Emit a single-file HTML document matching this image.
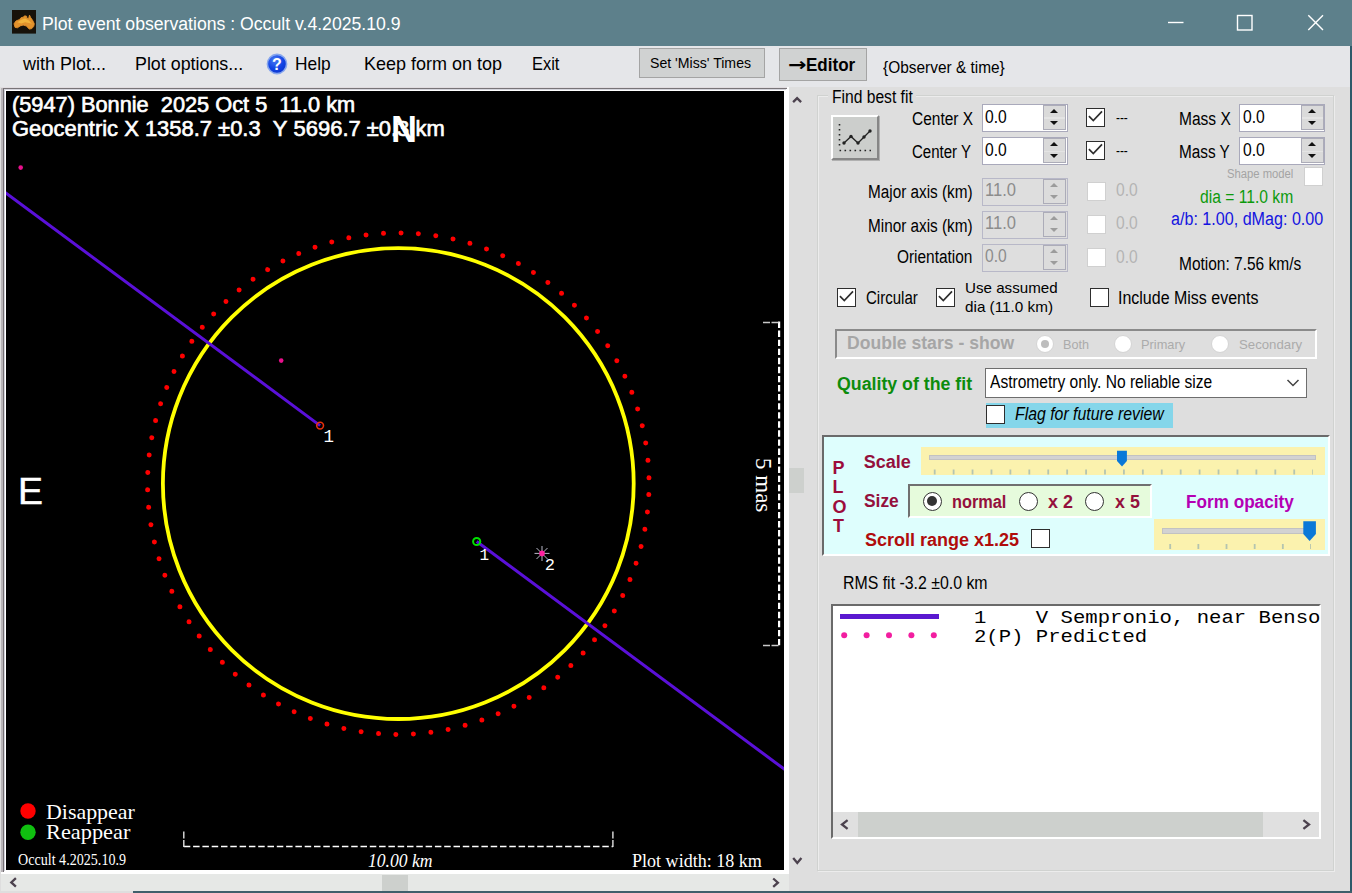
<!DOCTYPE html>
<html lang="en">
<head>
<meta charset="utf-8">
<title>Plot event observations : Occult v.4.2025.10.9</title>
<style>
html,body{margin:0;padding:0}
body{width:1352px;height:893px;overflow:hidden;background:#dedede;font-family:"Liberation Sans",sans-serif}
#win{position:relative;width:1352px;height:893px;overflow:hidden;background:#dedede}
#win div,#win span,#win svg{position:absolute;box-sizing:border-box}
.t{white-space:pre;transform-origin:0 50%;display:block}
.tb{left:0;top:0;width:1352px;height:46px;background:#5d808b}
.btn{background:#d0d2d2;border:1px solid #a4a4a4}
.inp{background:#fff;border:1.5px solid #a9a9bb}
.inpd{background:#dedede;border:1.5px solid #b8b8c8}
.cb{background:#fff;border:1.4px solid #2e2e2e;width:19px;height:19px}
.cbd{background:#fff;border:1px solid #d0d0d0;width:19px;height:19px}
.rb{background:#fff;border:1px solid #333;border-radius:50%;width:19px;height:19px}
.sp{width:22.5px;height:25px;background:linear-gradient(#dadada 0 11.5px,#e4e4e4 11.5px 13px,#dadada 13px);border:1px solid #acacb8}
.sp:before,.sp:after{content:"";position:absolute;left:5.7px;border:4.2px solid transparent}
.sp:before{top:-1.2px;border-bottom:4.8px solid #111}
.sp:after{top:14.6px;border-top:4.8px solid #111}
.spd{background:#dcdcdc}
.spd:before{border-bottom-color:#9c9c9c}
.spd:after{border-top-color:#9c9c9c}
.rb i{position:absolute;left:3.5px;top:3.5px;width:10px;height:10px;border-radius:50%;background:#333;display:block}
.rbd{background:#fff;border:1px solid #d4d4d4;border-radius:50%;width:18px;height:18px}
.rbd i{position:absolute;left:4px;top:4px;width:8px;height:8px;border-radius:50%;background:#bdbdbd;display:block}
</style>
</head>
<body>
<div id="win">
<!-- title bar -->
<div class="tb"></div>
<svg style="left:12px;top:10px" width="24" height="24" viewBox="0 0 24 24">
<rect x="0" y="0" width="24" height="23.6" fill="#17120a"/>
<g transform="translate(0.6,3.4) scale(0.96,0.8)"><path d="M1.5 13 L3.5 9.5 L7 7.8 L9 5.2 L11 4.8 L12.5 3 L14.6 3.6 L15 6.2 L16.6 6.8 L17.6 2.2 L18.8 5.2 L21 9 L22.6 13 L22 16.2 L20 19 L17.5 19.6 L15.6 17.6 L14.6 15.8 L11 14.6 L8 15.6 L5 18 L2.5 17.4 Z" fill="#e2922c" stroke="#e2922c" stroke-width="1" stroke-linejoin="round"/>
<path d="M5 11 L9 8 L13 6.5 L17 9 L20 13 L17 12 L13 11 L9 12.5 Z" fill="#f2b43c"/></g>
</svg>
<svg style="left:1160px;top:8px" width="180" height="30" viewBox="0 0 180 30" fill="none" stroke="#fff" stroke-width="1.4">
<path d="M8 14.5 H23.5"/>
<rect x="77.5" y="7.5" width="14.5" height="14.5"/>
<path d="M148.3 7.2 L163 22 M163 7.2 L148.3 22"/>
</svg>
<!-- right/bottom window edge -->
<div style="left:1350px;top:46px;width:2px;height:847px;background:#2e5a6a"></div>
<div style="left:133px;top:891px;width:1219px;height:2px;background:#3f5f6b"></div>
<!-- menu bar -->
<div style="left:0;top:46px;width:1350px;height:41px;background:#e5e6e9"></div>
<svg style="left:265.3px;top:52px" width="24" height="24" viewBox="0 0 24 24">
<defs><radialGradient id="hg" cx="0.4" cy="0.3" r="0.8"><stop offset="0" stop-color="#4a7cf4"/><stop offset="0.55" stop-color="#1244e4"/><stop offset="1" stop-color="#0a30c8"/></radialGradient></defs>
<circle cx="12" cy="12" r="9.6" fill="url(#hg)" stroke="#86a6ee" stroke-width="1.6"/>
<text x="12" y="17.6" text-anchor="middle" font-family="Liberation Sans, sans-serif" font-weight="bold" font-size="16" fill="#fff">?</text>
</svg>
<div class="btn" style="left:639px;top:48px;width:126px;height:30px"></div>
<div class="btn" style="left:779px;top:48px;width:88px;height:33px"></div>
<!-- plot frame -->
<div style="left:1px;top:87px;width:788px;height:787px;background:#fff"></div>
<div style="left:1px;top:86.5px;width:786px;height:1.5px;background:#e0dce0"></div>
<div style="left:1px;top:88px;width:786px;height:1.2px;background:#787478"></div>
<div style="left:4px;top:89.2px;width:782px;height:0.9px;background:#d4d4dc"></div>
<div style="left:1px;top:88px;width:2px;height:784px;background:#b8b4b8"></div>
<div style="left:3px;top:88px;width:1px;height:784px;background:#747074"></div>
<div style="left:4px;top:89.2px;width:1px;height:782px;background:#d4d4dc"></div>
<div style="left:6px;top:91px;width:778px;height:779px;background:#000"></div>
<svg style="left:6px;top:91px" width="778" height="779" viewBox="6 91 778 779">
<circle cx="398.3" cy="483.6" r="235.4" fill="none" stroke="#ffff00" stroke-width="3.8"/>
<circle cx="398.3" cy="483.65" r="250.75" fill="none" stroke="#ff0000" stroke-width="5" stroke-linecap="round" stroke-dasharray="0 17.5057" transform="rotate(2.5 398.3 483.65)"/>
<path d="M5 192.4 L320.1 425.6 M476.7 541.5 L785 769.7" stroke="#5a10d8" stroke-width="3" fill="none"/>
<circle cx="320.1" cy="425.6" r="3.4" fill="none" stroke="#e8300c" stroke-width="1.6"/>
<circle cx="476.7" cy="541.5" r="3.6" fill="none" stroke="#00e000" stroke-width="2"/>
<circle cx="20.7" cy="167.6" r="2.3" fill="#e8108c"/>
<circle cx="281.2" cy="360.6" r="2.3" fill="#e8108c"/>
<g stroke="#b8b8c8" stroke-width="1">
<path d="M542 546 V561 M534.5 553.4 H549.5 M536.5 548 L547.5 559 M547.5 548 L536.5 559"/>
</g>
<circle cx="542" cy="553.4" r="2.8" fill="#ff20a0"/>
<!-- 5 mas bar -->
<path d="M779.1 321.5 V646" stroke="#fff" stroke-width="2.2" stroke-dasharray="6.4 2.67" fill="none"/>
<path d="M763 322.5 H779 M763 645.5 H779" stroke="#c8c8c8" stroke-width="1.6" stroke-dasharray="7 1.5" fill="none"/>
<!-- km bar -->
<path d="M183.8 846.5 H613" stroke="#fff" stroke-width="1.5" stroke-dasharray="6.5 2.8" fill="none"/>
<path d="M183.8 831.5 V847 M612.9 831.5 V847" stroke="#e0e0e0" stroke-width="1.4" stroke-dasharray="7 1.5" fill="none"/>
<circle cx="28" cy="811" r="7.7" fill="#ff0000"/>
<circle cx="28" cy="832.2" r="7.7" fill="#10c010"/>
</svg>
<!-- plot scrollbars -->
<div style="left:1px;top:874px;width:788px;height:17px;background:#e6e8e6"></div>
<div style="left:789px;top:468px;width:15px;height:25px;background:#cdd0cd"></div>
<div style="left:382px;top:874.5px;width:26px;height:16px;background:#cdd0cd"></div>
<!-- group box -->
<div style="left:817px;top:95px;width:517px;height:776px;border:1px solid #d0d2d0;box-shadow:1px 1px 0 #ececec, inset 1px 1px 0 #ececec"></div>
<div style="left:828px;top:88px;width:88px;height:18px;background:#dedede"></div>
<!-- fit button -->
<div style="left:831px;top:114.5px;width:47.5px;height:45.5px;background:#cccecc;border:2px solid;border-color:#fff #868686 #868686 #fff;box-shadow:1px 1px 0 #b0b0b0"></div>
<svg style="left:831px;top:114px" width="48" height="46" viewBox="0 0 48 46">
<path d="M8.5 10 V35 M8.5 36.5 H40" stroke="#222" stroke-width="1.6" stroke-dasharray="1.6 3.4" fill="none"/>
<path d="M13 29 L20 22.5 L27 29 L39 17" stroke="#222" stroke-width="1.3" fill="none"/>
<g fill="#222"><circle cx="13" cy="29" r="1.7"/><circle cx="20" cy="22.5" r="1.7"/><circle cx="27" cy="29" r="1.7"/><circle cx="33" cy="23" r="1.7"/><circle cx="39" cy="17" r="1.7"/></g>
</svg>
<!-- numeric inputs -->
<div class="inp" style="left:981.5px;top:103.5px;width:86px;height:28px"></div>
<div class="inp" style="left:981.5px;top:136.8px;width:86px;height:28px"></div>
<div class="inp" style="left:1239.3px;top:103.5px;width:86px;height:28px"></div>
<div class="inp" style="left:1239.3px;top:136.8px;width:86px;height:28px"></div>
<div class="inpd" style="left:981.5px;top:177.5px;width:86px;height:28px"></div>
<div class="inpd" style="left:981.5px;top:210.5px;width:86px;height:28px"></div>
<div class="inpd" style="left:981.5px;top:243.5px;width:86px;height:28px"></div>
<!-- spinners -->
<div class="sp" style="left:1043px;top:105px"></div>
<div class="sp" style="left:1043px;top:138.3px"></div>
<div class="sp" style="left:1301px;top:105px"></div>
<div class="sp" style="left:1301px;top:138.3px"></div>
<div class="sp spd" style="left:1043px;top:179px"></div>
<div class="sp spd" style="left:1043px;top:212px"></div>
<div class="sp spd" style="left:1043px;top:245px"></div>
<!-- checkboxes -->
<div class="cb ck" style="left:1086px;top:107.7px"><svg style="left:-1.4px;top:-1.4px" width="19" height="19" viewBox="0 0 19 19"><path d="M2.9 9.1 L7.3 13.5 L16 4.4" fill="none" stroke="#2e2e2e" stroke-width="1.7"/></svg></div>
<div class="cb ck" style="left:1086px;top:140.5px"><svg style="left:-1.4px;top:-1.4px" width="19" height="19" viewBox="0 0 19 19"><path d="M2.9 9.1 L7.3 13.5 L16 4.4" fill="none" stroke="#2e2e2e" stroke-width="1.7"/></svg></div>
<div class="cbd" style="left:1087px;top:181.5px"></div>
<div class="cbd" style="left:1087px;top:214.5px"></div>
<div class="cbd" style="left:1087px;top:247.5px"></div>
<div class="cbd" style="left:1304px;top:167px"></div>
<div class="cb ck" style="left:837.3px;top:287.8px"><svg style="left:-1.4px;top:-1.4px" width="19" height="19" viewBox="0 0 19 19"><path d="M2.9 9.1 L7.3 13.5 L16 4.4" fill="none" stroke="#2e2e2e" stroke-width="1.7"/></svg></div>
<div class="cb ck" style="left:936.3px;top:287.8px"><svg style="left:-1.4px;top:-1.4px" width="19" height="19" viewBox="0 0 19 19"><path d="M2.9 9.1 L7.3 13.5 L16 4.4" fill="none" stroke="#2e2e2e" stroke-width="1.7"/></svg></div>
<div class="cb" style="left:1089.5px;top:287.8px"></div>
<!-- double stars -->
<div style="left:835px;top:328.5px;width:482px;height:30.5px;border:2px solid;border-color:#8a8a8a #fff #fff #8a8a8a"></div>
<div class="rbd" style="left:1035.5px;top:335px"><i></i></div>
<div class="rbd" style="left:1113.7px;top:335px"></div>
<div class="rbd" style="left:1211px;top:335px"></div>
<!-- combo -->
<div style="left:985px;top:367.8px;width:321.5px;height:30.2px;background:#fff;border:1px solid #6e6e6e"></div>
<svg style="left:1284px;top:376px" width="18" height="14" viewBox="0 0 18 14"><path d="M3.5 4 L9 9.5 L14.5 4" fill="none" stroke="#444" stroke-width="1.5"/></svg>
<!-- flag -->
<div style="left:986px;top:403px;width:187px;height:25px;background:#85d6ea"></div>
<div class="cb" style="left:986px;top:404.8px"></div>
<!-- PLOT panel -->
<div style="left:821.5px;top:434.5px;width:508px;height:121.5px;background:#defefd;border:2px solid;border-color:#6a6a6a #fff #fff #6a6a6a"></div>
<div style="left:920.8px;top:446.6px;width:404.5px;height:28.8px;background:#fbf2ae"></div>
<div style="left:928.5px;top:454.5px;width:387px;height:5px;background:#d2d2d2;border:1px solid #c2c2c2"></div>
<svg style="left:926px;top:468px" width="395" height="8" viewBox="926 468 395 8"><path d="M933.8 472 H1313" stroke="#b4c4b0" stroke-width="5" stroke-dasharray="1.8 17.122" fill="none"/></svg>
<svg style="left:1116px;top:450px" width="12" height="18" viewBox="0 0 12 18"><path d="M1 0.8 H10.9 V11 L6 16.5 L1 11 Z" fill="#0a78d8"/></svg>
<div style="left:907.7px;top:484.3px;width:244px;height:34px;background:#e6fbdc;border:2px solid;border-color:#707070 #fff #fff #707070"></div>
<div class="rb" style="left:922.7px;top:491.5px"><i></i></div>
<div class="rb" style="left:1019px;top:491.5px"></div>
<div class="rb" style="left:1085px;top:491.5px"></div>
<div class="cb" style="left:1030.5px;top:529.3px"></div>
<div style="left:1153.8px;top:518.7px;width:171.5px;height:31.5px;background:#fbf2ae"></div>
<div style="left:1162px;top:528px;width:153px;height:5.5px;background:#d2d2d2;border:1px solid #c2c2c2"></div>
<svg style="left:1160px;top:542px" width="160" height="8" viewBox="1160 542 160 8"><path d="M1169.3 546.5 H1311" stroke="#b4c4b0" stroke-width="5" stroke-dasharray="1.8 26.36" fill="none"/></svg>
<svg style="left:1302px;top:520px" width="15" height="22" viewBox="0 0 15 22"><path d="M1.3 1.2 H13.9 V14 L7.6 20.9 L1.3 14 Z" fill="#0a78d8"/></svg>
<!-- list box -->
<div style="left:830.7px;top:604.3px;width:490px;height:235px;background:#fff;border:2px solid;border-color:#6a6a6a #fff #fff #6a6a6a"></div>
<div style="left:832.7px;top:812px;width:486px;height:25px;background:#e0e0e0"></div>
<div style="left:858px;top:812px;width:405px;height:25px;background:#cdd0cd"></div>
<div style="left:840px;top:614px;width:99px;height:4.8px;background:#5a18d0"></div>
<svg style="left:838px;top:630px" width="104" height="11" viewBox="838 630 104 11"><g fill="#f21ea0"><circle cx="844.2" cy="635.2" r="3"/><circle cx="866.6" cy="635.2" r="3"/><circle cx="889" cy="635.2" r="3"/><circle cx="911.4" cy="635.2" r="3"/><circle cx="933.8" cy="635.2" r="3"/></g></svg>
<span style="left:751.5px;top:457.5px;writing-mode:vertical-rl;font:23px/1 'Liberation Serif',serif;color:#fff;white-space:pre">5 mas</span>
<svg style="left:0;top:0" width="1352" height="893" viewBox="0 0 1352 893" fill="none" stroke="#4c424e" stroke-width="2.3">
<path d="M793.1 102.1 L797.1 98.1 L801.1 102.1"/>
<path d="M793.2 857.9 L797.3 862.9 L801.4 857.9"/>
<path d="M15.9 878.2 L11.3 882.4 L15.9 886.6"/>
<path d="M773.2 878.5 L777.9 882.7 L773.2 886.9"/>
<path d="M847.6 820.2 L842 824.5 L847.6 828.8"/>
<path d="M1303.4 820.2 L1309 824.5 L1303.4 828.8"/>
</svg>

<span class="t" style="left:42.0px;top:15.3px;font:18px/1 'Liberation Sans',sans-serif;color:#fff;transform:scaleX(0.980);">Plot event observations : Occult v.4.2025.10.9</span>
<span class="t" style="left:22.6px;top:55.7px;font:17.8px/1 'Liberation Sans',sans-serif;color:#000;transform:scaleX(1.012);">with Plot...</span>
<span class="t" style="left:135.3px;top:55.7px;font:17.8px/1 'Liberation Sans',sans-serif;color:#000;transform:scaleX(1.004);">Plot options...</span>
<span class="t" style="left:295.0px;top:55.7px;font:17.8px/1 'Liberation Sans',sans-serif;color:#000;transform:scaleX(0.976);">Help</span>
<span class="t" style="left:363.6px;top:55.7px;font:17.8px/1 'Liberation Sans',sans-serif;color:#000;transform:scaleX(1.012);">Keep form on top</span>
<span class="t" style="left:532.0px;top:55.7px;font:17.8px/1 'Liberation Sans',sans-serif;color:#000;transform:scaleX(0.924);">Exit</span>
<span class="t" style="left:650.0px;top:56.4px;font:14.5px/1 'Liberation Sans',sans-serif;color:#000;transform:scaleX(0.973);">Set 'Miss' Times</span>
<span class="t" style="left:787.5px;top:56.0px;font:normal bold 18px/1 'DejaVu Sans',sans-serif;color:#000;transform:scaleX(1.226);">→</span>
<span class="t" style="left:806.4px;top:56.0px;font:normal bold 18px/1 'Liberation Sans',sans-serif;color:#000;transform:scaleX(0.946);">Editor</span>
<span class="t" style="left:883.4px;top:58.7px;font:16.5px/1 'Liberation Sans',sans-serif;color:#000;transform:scaleX(0.935);">{Observer &amp; time}</span>
<span class="t" style="left:11.5px;top:94.1px;font:22.3px/1 'Liberation Sans',sans-serif;color:#fff;transform:scaleX(0.976);-webkit-text-stroke:0.65px #fff;">(5947)&nbsp;Bonnie&nbsp;&nbsp;2025&nbsp;Oct&nbsp;5&nbsp;&nbsp;11.0&nbsp;km</span>
<span class="t" style="left:11.5px;top:117.8px;font:22.3px/1 'Liberation Sans',sans-serif;color:#fff;transform:scaleX(0.984);-webkit-text-stroke:0.65px #fff;">Geocentric&nbsp;X&nbsp;1358.7&nbsp;±0.3&nbsp;&nbsp;Y&nbsp;5696.7&nbsp;±0.3&nbsp;km</span>
<span class="t" style="left:391.0px;top:111.6px;font:normal bold 36px/1 'Liberation Sans',sans-serif;color:#fff;">N</span>
<span class="t" style="left:18.0px;top:472.9px;font:37.4px/1 'Liberation Sans',sans-serif;color:#fff;-webkit-text-stroke:0.5px #fff;">E</span>
<span class="t" style="left:323.5px;top:428.9px;font:17.5px/1 'Liberation Mono',monospace;color:#fff;">1</span>
<span class="t" style="left:479.6px;top:547.9px;font:16px/1 'Liberation Mono',monospace;color:#fff;">1</span>
<span class="t" style="left:544.8px;top:556.5px;font:17px/1 'Liberation Mono',monospace;color:#fff;">2</span>
<span class="t" style="left:45.6px;top:801.1px;font:22px/1 'Liberation Serif',serif;color:#fff;transform:scaleX(0.996);">Disappear</span>
<span class="t" style="left:45.6px;top:821.3px;font:22px/1 'Liberation Serif',serif;color:#fff;transform:scaleX(1.016);">Reappear</span>
<span class="t" style="left:17.8px;top:851.5px;font:16px/1 'Liberation Serif',serif;color:#fff;transform:scaleX(0.881);">Occult 4.2025.10.9</span>
<span class="t" style="left:367.7px;top:850.8px;font:italic normal 19.5px/1 'Liberation Serif',serif;color:#fff;transform:scaleX(0.903);">10.00 km</span>
<span class="t" style="left:631.7px;top:851.2px;font:19px/1 'Liberation Serif',serif;color:#fff;transform:scaleX(0.950);">Plot width: 18 km</span>
<span class="t" style="left:831.7px;top:87.8px;font:18px/1 'Liberation Sans',sans-serif;color:#000;transform:scaleX(0.868);">Find best fit</span>
<span class="t" style="left:911.5px;top:110.3px;font:18px/1 'Liberation Sans',sans-serif;color:#000;transform:scaleX(0.860);">Center X</span>
<span class="t" style="left:911.5px;top:143.4px;font:18px/1 'Liberation Sans',sans-serif;color:#000;transform:scaleX(0.834);">Center Y</span>
<span class="t" style="left:985.0px;top:107.8px;font:18px/1 'Liberation Sans',sans-serif;color:#000;transform:scaleX(0.867);">0.0</span>
<span class="t" style="left:985.0px;top:140.5px;font:18px/1 'Liberation Sans',sans-serif;color:#000;transform:scaleX(0.867);">0.0</span>
<span class="t" style="left:1116.1px;top:110.8px;font:14px/1 'Liberation Sans',sans-serif;color:#000;transform:scaleX(0.843);">---</span>
<span class="t" style="left:1116.1px;top:143.8px;font:14px/1 'Liberation Sans',sans-serif;color:#000;transform:scaleX(0.843);">---</span>
<span class="t" style="left:1178.6px;top:110.3px;font:18px/1 'Liberation Sans',sans-serif;color:#000;transform:scaleX(0.863);">Mass X</span>
<span class="t" style="left:1178.6px;top:143.4px;font:18px/1 'Liberation Sans',sans-serif;color:#000;transform:scaleX(0.851);">Mass Y</span>
<span class="t" style="left:1242.8px;top:107.8px;font:18px/1 'Liberation Sans',sans-serif;color:#000;transform:scaleX(0.871);">0.0</span>
<span class="t" style="left:1242.8px;top:140.5px;font:18px/1 'Liberation Sans',sans-serif;color:#000;transform:scaleX(0.871);">0.0</span>
<span class="t" style="left:1226.9px;top:168.3px;font:12px/1 'Liberation Sans',sans-serif;color:#a4a4a4;transform:scaleX(0.938);">Shape model</span>
<span class="t" style="left:868.0px;top:183.4px;font:18px/1 'Liberation Sans',sans-serif;color:#000;transform:scaleX(0.850);">Major axis (km)</span>
<span class="t" style="left:868.0px;top:216.7px;font:18px/1 'Liberation Sans',sans-serif;color:#000;transform:scaleX(0.850);">Minor axis (km)</span>
<span class="t" style="left:896.6px;top:248.4px;font:18px/1 'Liberation Sans',sans-serif;color:#000;transform:scaleX(0.856);">Orientation</span>
<span class="t" style="left:985.0px;top:180.8px;font:18px/1 'Liberation Sans',sans-serif;color:#8c8c8c;transform:scaleX(0.920);">11.0</span>
<span class="t" style="left:985.0px;top:213.6px;font:18px/1 'Liberation Sans',sans-serif;color:#8c8c8c;transform:scaleX(0.920);">11.0</span>
<span class="t" style="left:985.0px;top:246.8px;font:18px/1 'Liberation Sans',sans-serif;color:#8c8c8c;transform:scaleX(0.867);">0.0</span>
<span class="t" style="left:1115.5px;top:181.3px;font:18px/1 'Liberation Sans',sans-serif;color:#b4b4b4;transform:scaleX(0.867);">0.0</span>
<span class="t" style="left:1115.5px;top:214.0px;font:18px/1 'Liberation Sans',sans-serif;color:#b4b4b4;transform:scaleX(0.867);">0.0</span>
<span class="t" style="left:1115.5px;top:247.8px;font:18px/1 'Liberation Sans',sans-serif;color:#b4b4b4;transform:scaleX(0.867);">0.0</span>
<span class="t" style="left:1200.0px;top:188.1px;font:18px/1 'Liberation Sans',sans-serif;color:#0c9a0c;transform:scaleX(0.869);">dia = 11.0 km</span>
<span class="t" style="left:1171.4px;top:209.5px;font:18px/1 'Liberation Sans',sans-serif;color:#1414e0;transform:scaleX(0.895);">a/b: 1.00, dMag: 0.00</span>
<span class="t" style="left:1178.6px;top:254.6px;font:18px/1 'Liberation Sans',sans-serif;color:#000;transform:scaleX(0.860);">Motion: 7.56 km/s</span>
<span class="t" style="left:866.3px;top:288.6px;font:18px/1 'Liberation Sans',sans-serif;color:#000;transform:scaleX(0.835);">Circular</span>
<span class="t" style="left:965.3px;top:280.3px;font:15px/1 'Liberation Sans',sans-serif;color:#000;transform:scaleX(1.010);">Use assumed</span>
<span class="t" style="left:965.3px;top:299.4px;font:15px/1 'Liberation Sans',sans-serif;color:#000;transform:scaleX(1.018);">dia (11.0 km)</span>
<span class="t" style="left:1118.0px;top:288.6px;font:18px/1 'Liberation Sans',sans-serif;color:#000;transform:scaleX(0.888);">Include Miss events</span>
<span class="t" style="left:846.9px;top:334.4px;font:normal bold 18.3px/1 'Liberation Sans',sans-serif;color:#a6a6a6;transform:scaleX(0.962);">Double stars - show</span>
<span class="t" style="left:1063.0px;top:337.8px;font:13.5px/1 'Liberation Sans',sans-serif;color:#ababab;transform:scaleX(0.936);">Both</span>
<span class="t" style="left:1141.4px;top:337.8px;font:13.5px/1 'Liberation Sans',sans-serif;color:#ababab;transform:scaleX(0.948);">Primary</span>
<span class="t" style="left:1238.7px;top:337.8px;font:13.5px/1 'Liberation Sans',sans-serif;color:#ababab;transform:scaleX(0.979);">Secondary</span>
<span class="t" style="left:836.9px;top:374.6px;font:normal bold 18.3px/1 'Liberation Sans',sans-serif;color:#0c8c0c;transform:scaleX(0.971);">Quality of the fit</span>
<span class="t" style="left:990.2px;top:373.0px;font:18px/1 'Liberation Sans',sans-serif;color:#000;transform:scaleX(0.865);">Astrometry only. No reliable size</span>
<span class="t" style="left:1015.4px;top:405.1px;font:italic normal 18px/1 'Liberation Sans',sans-serif;color:#000;transform:scaleX(0.880);">Flag for future review</span>
<span class="t" style="left:832.5px;top:458.6px;font:normal bold 18px/1 'Liberation Sans',sans-serif;color:#9c0c3c;">P</span>
<span class="t" style="left:832.5px;top:478.1px;font:normal bold 18px/1 'Liberation Sans',sans-serif;color:#9c0c3c;">L</span>
<span class="t" style="left:832.5px;top:498.0px;font:normal bold 18px/1 'Liberation Sans',sans-serif;color:#9c0c3c;">O</span>
<span class="t" style="left:833.0px;top:517.0px;font:normal bold 18px/1 'Liberation Sans',sans-serif;color:#9c0c3c;">T</span>
<span class="t" style="left:863.8px;top:452.8px;font:normal bold 18px/1 'Liberation Sans',sans-serif;color:#94103c;">Scale</span>
<span class="t" style="left:863.8px;top:491.8px;font:normal bold 18px/1 'Liberation Sans',sans-serif;color:#94103c;transform:scaleX(0.966);">Size</span>
<span class="t" style="left:951.9px;top:493.2px;font:normal bold 18px/1 'Liberation Sans',sans-serif;color:#94103c;transform:scaleX(0.906);">normal</span>
<span class="t" style="left:1048.1px;top:493.2px;font:normal bold 18px/1 'Liberation Sans',sans-serif;color:#94103c;transform:scaleX(0.995);">x 2</span>
<span class="t" style="left:1114.5px;top:493.2px;font:normal bold 18px/1 'Liberation Sans',sans-serif;color:#94103c;transform:scaleX(0.991);">x 5</span>
<span class="t" style="left:1185.9px;top:493.2px;font:normal bold 18px/1 'Liberation Sans',sans-serif;color:#b400b4;transform:scaleX(0.953);">Form opacity</span>
<span class="t" style="left:864.9px;top:530.5px;font:normal bold 18px/1 'Liberation Sans',sans-serif;color:#b00c0c;">Scroll range x1.25</span>
<span class="t" style="left:842.5px;top:574.0px;font:18px/1 'Liberation Sans',sans-serif;color:#000;transform:scaleX(0.882);">RMS fit -3.2 ±0.0 km</span>
<span class="t" style="left:973.6px;top:610.2px;font:17.5px/1 'Liberation Mono',monospace;color:#000;transform:scaleX(1.178);">1&nbsp;&nbsp;&nbsp;&nbsp;V&nbsp;Sempronio,&nbsp;near&nbsp;Benso</span>
<span class="t" style="left:973.6px;top:628.9px;font:17.5px/1 'Liberation Mono',monospace;color:#000;transform:scaleX(1.178);">2(P) Predicted</span>
</div>
</body>
</html>
